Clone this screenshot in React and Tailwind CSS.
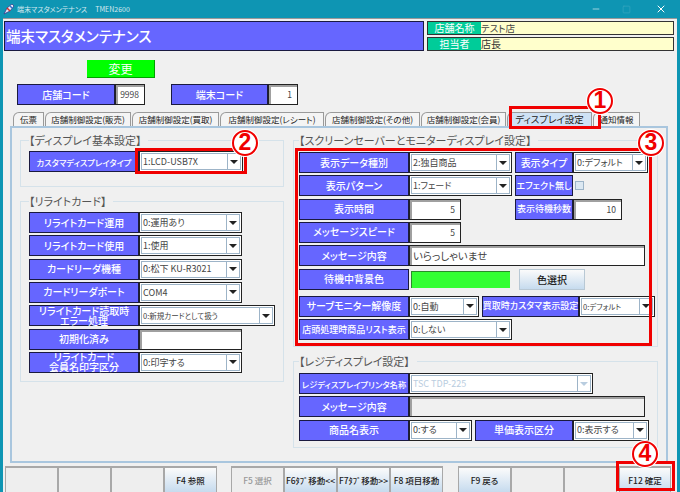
import { X, Minus, Square } from "lucide-react";

const FONT = { fontFamily: '"Noto Sans CJK JP", "Liberation Sans", sans-serif' };

// blue caption cell used by every form row
function Caption({ w, children, small, tiny }) {
  const size = tiny ? "text-[8.3px]" : small ? "text-[9px]" : "text-[10px]";
  return (
    <div
      className={`${w} h-full shrink-0 bg-[#6666ff] border border-[#1a1a40] text-white font-medium flex items-center justify-center text-center whitespace-nowrap leading-[10px] ${size}`}
    >
      {children}
    </div>
  );
}

function Select({ w, value, small, disabled }) {
  return (
    <div className={`${w} h-full shrink-0 bg-white border border-[#222] p-[1px] flex`}>
      <div className="flex-1 min-w-0 flex border border-[#9db4c8]">
        <div
          className={`flex-1 min-w-0 pl-[1px] flex items-center whitespace-nowrap overflow-hidden ${small ? "text-[7.5px]" : "text-[9px]"} ${disabled ? "text-[#b9cde0]" : "text-[#444]"}`}
        >
          {value}
        </div>
        <div className="w-[13px] shrink-0 border-l border-[#9db4c8] flex items-center justify-center">
          <div className={`w-0 h-0 border-x-[4px] border-x-transparent border-t-[4px] ${disabled ? "border-t-[#b9cde0]" : "border-t-[#222]"}`} />
        </div>
      </div>
    </div>
  );
}

function Input({ w, value, big, disabled }) {
  return (
    <div className={`${w} h-full shrink-0 border border-[#222] ${disabled ? "bg-[#f0f0f0]" : "bg-white"} shadow-[inset_2px_2px_0_#a0a0a0] flex items-center ${big ? "justify-start pl-[3px] text-[10.5px]" : "justify-end pr-[5px] text-[8.5px]"} text-[#444]`}>
      {value}
    </div>
  );
}

function Row({ children, className = "" }) {
  return <div className={`flex h-[21px] ${className}`}>{children}</div>;
}

function Group({ title, className, children }) {
  return (
    <fieldset className={`border border-[#d5e2ea] ${className}`}>
      <legend className="pr-[7px] text-[11px] leading-[14px] text-[#555]">{title}</legend>
      {children}
    </fieldset>
  );
}

function Tab({ w, active, children }) {
  return (
    <div
      className={`${w} h-[14px] shrink-0 rounded-tl-[6px] border border-b-0 border-[#9a9a9a] leading-[13px] text-center whitespace-nowrap text-[#222] overflow-hidden ${active ? "bg-[#cfe2f5] text-[9.5px]" : "bg-[#f4f4f4] text-[8.5px]"}`}
    >
      {children}
    </div>
  );
}

function FnKey({ w = "w-[53px]", children, off, blank }) {
  return (
    <div
      className={`${w} h-[26px] shrink-0 border-x border-t-2 border-[#a8a8a8] flex items-center justify-center text-[8.5px] font-medium whitespace-nowrap ${blank || off ? "bg-[#eeeeee]" : "bg-gradient-to-b from-[#fbfbfb] to-[#c6dbee]"} ${off ? "text-[#999]" : "text-[#222]"}`}
    >
      {children}
    </div>
  );
}

function Marker({ n, className }) {
  return (
    <div
      className={`absolute w-[26px] h-[26px] rounded-full bg-white border-[2.5px] border-[#f00000] shadow-[0_0_0_1px_#fff] text-[#f00000] font-bold text-[23px] leading-[21px] text-center ${className}`}
      style={{ fontFamily: '"Liberation Sans", sans-serif' }}
    >
      {n}
    </div>
  );
}

function RedBox({ className }) {
  return <div className={`absolute border-[3px] border-[#f00000] ${className}`} />;
}

export default function App() {
  return (
    <div className="relative w-[680px] h-[492px] overflow-hidden bg-[#0e95b3] flex flex-col [font-feature-settings:'palt']" style={FONT}>
      {/* title bar */}
      <div className="h-[18px] shrink-0 flex items-center pl-[3px] text-[7px] text-white">
        <svg width="11" height="11" viewBox="0 0 11 11" className="mr-[3px] shrink-0">
          <path d="M1 10 L4 4 L9 0 L11 2 L7 7 Z" fill="#e8e8f4" stroke="#333b8c" strokeWidth="0.8" />
          <path d="M4 4 L7 7" stroke="#d0342c" strokeWidth="1.6" />
          <path d="M7 2 L9 4" stroke="#2f6fd0" strokeWidth="1.4" />
        </svg>
        <span className="opacity-80">端末マスタメンテナンス</span>
        <span className="ml-[8px] opacity-80">TMEN2600</span>
        <div className="ml-auto flex items-center text-white">
          <Minus size={10} className="mr-[21px] opacity-70" />
          <Square size={9} className="mr-[24px] opacity-15" />
          <X size={12} className="mr-[13px]" />
        </div>
      </div>

      {/* window body */}
      <div className="flex-1 mx-[3px] mb-[2px] bg-[#f0f0f0] border-t border-[#999] flex flex-col">
        {/* header */}
        <div className="h-[30px] mt-[2px] ml-[1px] flex shrink-0">
          <div className="w-[420px] bg-[#6666ff] border border-[#1a1a40] text-white text-[14.5px] font-medium flex items-center pl-[1px]">
            端末マスタメンテナンス
          </div>
          <div className="ml-[3px] w-[247px] flex flex-col justify-between">
            <div className="h-[14px] flex border border-[#333]">
              <div className="w-[53px] bg-[#00cc99] text-white text-[10px] leading-[12px] text-center">店舗名称</div>
              <div className="flex-1 bg-[#ffffcc] text-[9.5px] leading-[12px] text-[#444]">テスト店</div>
            </div>
            <div className="h-[14px] flex border border-[#333]">
              <div className="w-[53px] bg-[#00cc99] text-white text-[10px] leading-[12px] text-center">担当者</div>
              <div className="flex-1 bg-[#ffffcc] text-[10px] leading-[12px] text-[#333]">店長</div>
            </div>
          </div>
        </div>

        <div className="ml-[84px] mt-[9px] w-[68px] h-[18px] shrink-0 bg-[#00ff00] border-b border-r border-[#00a000] text-white text-[12px] leading-[17px] text-center">
          変更
        </div>

        <div className="flex ml-[14px] mt-[6px] shrink-0">
          <Row>
            <Caption w="w-[98px]">店舗コード</Caption>
            <Input w="w-[30px]" value="9998" />
          </Row>
          <Row className="ml-[26px]">
            <Caption w="w-[97px]">端末コード</Caption>
            <Input w="w-[30px]" value="1" />
          </Row>
        </div>

        {/* tabs */}
        <div className="flex ml-[10px] mt-[7px] shrink-0 gap-[1px]">
          <Tab w="w-[31px]">伝票</Tab>
          <Tab w="w-[86px]">店舗制御設定(販売)</Tab>
          <Tab w="w-[87px]">店舗制御設定(買取)</Tab>
          <Tab w="w-[104px]">店舗制御設定(レシート)</Tab>
          <Tab w="w-[95px]">店舗制御設定(その他)</Tab>
          <Tab w="w-[85px]">店舗制御設定(会員)</Tab>
          <Tab w="w-[85px]" active>ディスプレイ設定</Tab>
          <Tab w="w-[47px]">通知情報</Tab>
        </div>

        {/* tab panel */}
        <div className="ml-[7px] mr-[9px] h-[337px] shrink-0 border-2 border-[#a9c6de] flex pl-[8px] pt-[5px]">
          <div className="w-[264px] shrink-0">
            <Group title="【ディスプレイ基本設定】" className="h-[54px] pl-[8px] pt-[4px]">
              <Row>
                <Caption w="w-[110px]" tiny>カスタマディスプレイタイプ</Caption>
                <Select w="w-[104px]" value="1:LCD-USB7X" />
              </Row>
            </Group>
            <Group title="【リライトカード】" className="h-[188px] mt-[7px] pl-[8px] pt-[4px]">
              <div className="flex flex-col gap-[2.33px]">
                <Row><Caption w="w-[110px]">リライトカード運用</Caption><Select w="w-[103px]" value="0:運用あり" /></Row>
                <Row><Caption w="w-[110px]">リライトカード使用</Caption><Select w="w-[103px]" value="1:使用" /></Row>
                <Row><Caption w="w-[110px]">カードリーダ機種</Caption><Select w="w-[103px]" value="0:松下 KU-R3021" /></Row>
                <Row><Caption w="w-[110px]">カードリーダポート</Caption><Select w="w-[103px]" value="COM4" /></Row>
                <Row><Caption w="w-[110px]">リライトカード読取時<br />エラー処理</Caption><Select w="w-[136px]" value="0:新規カードとして扱う" small /></Row>
                <Row><Caption w="w-[110px]">初期化済み</Caption><Input w="w-[103px]" value="" /></Row>
                <Row><Caption w="w-[110px]">リライトカード<br />会員名印字区分</Caption><Select w="w-[103px]" value="0:印字する" /></Row>
              </div>
            </Group>
          </div>

          <div className="w-[365px] shrink-0 ml-[9px]">
            <Group title="【スクリーンセーバーとモニターディスプレイ設定】" className="h-[214px] pl-[5px] pt-[5px]">
              <div className="flex flex-col gap-[2.33px]">
                <Row>
                  <Caption w="w-[110px]">表示データ種別</Caption>
                  <Select w="w-[103px]" value="2:独自商品" />
                  <Caption w="w-[58px] ml-[3px]">表示タイプ</Caption>
                  <Select w="w-[75px]" value="0:デフォルト" />
                </Row>
                <Row>
                  <Caption w="w-[110px]">表示パターン</Caption>
                  <Select w="w-[103px]" value="1:フェード" />
                  <Caption w="w-[58px] ml-[3px]" small>エフェクト無し</Caption>
                  <div className="ml-[2px] self-center w-[9px] h-[9px] bg-[#dce8f2] border border-[#9db4c8]" />
                </Row>
                <Row>
                  <Caption w="w-[110px]">表示時間</Caption>
                  <Input w="w-[52px]" value="5" />
                  <Caption w="w-[58px] ml-[54px]" small>表示待機秒数</Caption>
                  <Input w="w-[49px]" value="10" />
                </Row>
                <Row><Caption w="w-[110px]">メッセージスピード</Caption><Input w="w-[52px]" value="5" /></Row>
                <Row><Caption w="w-[110px]">メッセージ内容</Caption><Input big w="w-[236px]" value="いらっしゃいませ" /></Row>
                <Row>
                  <Caption w="w-[110px]">待機中背景色</Caption>
                  <div className="w-[103px] h-full shrink-0 bg-[#33ff33] border-2 border-[#f0f0f0] shadow-[inset_1px_1px_0_#2a8a2a]" />
                  <div className="ml-[7px] w-[66px] h-full shrink-0 border border-[#b8c8d4] bg-gradient-to-b from-[#fbfbfb] to-[#c6dbee] text-[10px] font-medium text-[#222] flex items-center justify-center">色選択</div>
                </Row>
                <Row className="mt-[4px]">
                  <Caption w="w-[110px]">サーブモニター解像度</Caption>
                  <Select w="w-[70px]" value="0:自動" />
                  <Caption w="w-[97px] ml-[3px]" small>買取時カスタマ表示設定</Caption>
                  <Select w="w-[76px]" value="0:デフォルト" small />
                </Row>
                <Row><Caption w="w-[110px]" small>店頭処理時商品リスト表示</Caption><Select w="w-[103px]" value="0:しない" /></Row>
              </div>
            </Group>
            <Group title="【レジディスプレイ設定】" className="h-[94px] mt-[7px] pl-[5px] pt-[5px]">
              <div className="flex flex-col gap-[2.33px]">
                <Row><Caption w="w-[110px]" tiny>レジディスプレイプリンタ名称</Caption><Select w="w-[184px]" value="TSC TDP-225" disabled /></Row>
                <Row><Caption w="w-[110px]">メッセージ内容</Caption><Input w="w-[236px]" value="" disabled /></Row>
                <Row>
                  <Caption w="w-[110px]">商品名表示</Caption>
                  <Select w="w-[63px]" value="0:する" />
                  <Caption w="w-[98px] ml-[3px]">単価表示区分</Caption>
                  <Select w="w-[76px]" value="0:表示する" />
                </Row>
              </div>
            </Group>
          </div>
        </div>

        {/* function keys */}
        <div className="flex ml-[2px] mt-[3px] shrink-0">
          <FnKey blank />
          <FnKey blank />
          <FnKey blank />
          <FnKey>F4 参照</FnKey>
          <FnKey off w="w-[53px] ml-[14px]">F5 選択</FnKey>
          <FnKey>F6ﾀﾌﾞ移動&lt;&lt;</FnKey>
          <FnKey>F7ﾀﾌﾞ移動&gt;&gt;</FnKey>
          <FnKey>F8 項目移動</FnKey>
          <FnKey w="w-[53px] ml-[15px]">F9 戻る</FnKey>
          <FnKey blank />
          <FnKey blank />
          <FnKey w="w-[52px] ml-[2px]">F12 確定</FnKey>
        </div>
      </div>

      {/* red annotations */}
      <RedBox className="left-[509px] top-[106px] w-[92px] h-[23px]" />
      <RedBox className="left-[135px] top-[148px] w-[112px] h-[26px]" />
      <RedBox className="left-[295px] top-[148px] w-[357px] h-[198px]" />
      <RedBox className="left-[616px] top-[461px] w-[59px] h-[30px]" />
      <Marker n="1" className="left-[587px] top-[88px]" />
      <Marker n="2" className="left-[232px] top-[130px]" />
      <Marker n="3" className="left-[638px] top-[130px]" />
      <Marker n="4" className="left-[632px] top-[441px]" />
    </div>
  );
}
